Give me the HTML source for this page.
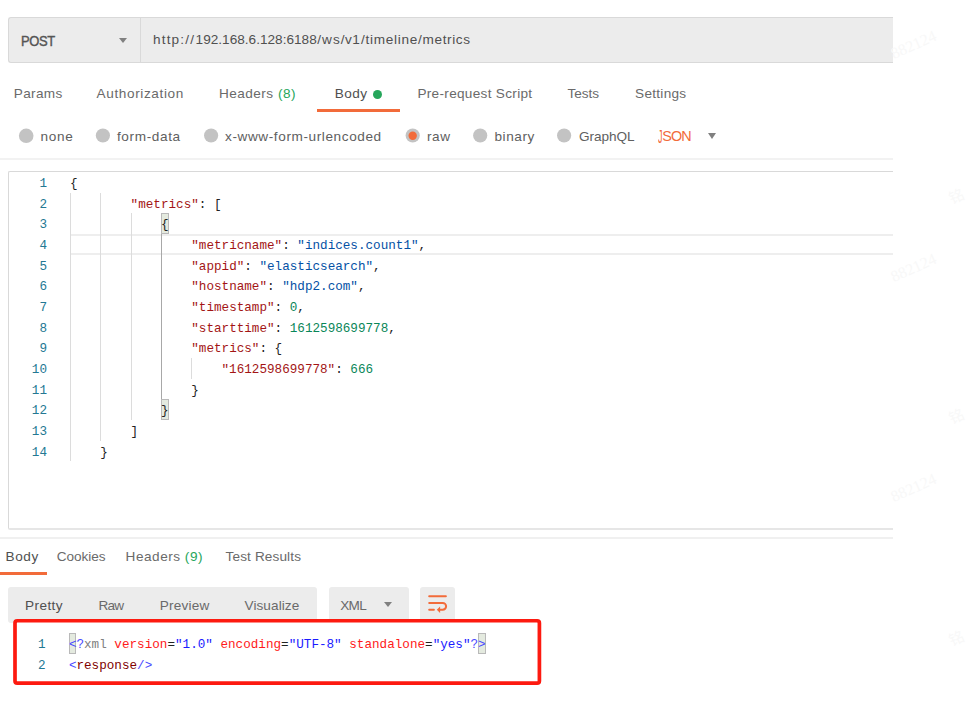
<!DOCTYPE html>
<html><head><meta charset="utf-8"><title>Postman</title>
<style>
html,body{margin:0;padding:0;background:#fff;}
body{width:977px;height:703px;position:relative;overflow:hidden;font-family:"Liberation Sans", sans-serif;font-size:13.6px;}
.t{position:absolute;white-space:nowrap;line-height:13.6px;font-size:13.6px;}
.abs{position:absolute;}
.ln{position:absolute;left:19px;width:28px;text-align:right;font-family:"Liberation Mono",monospace;font-size:12.63px;line-height:20.67px;height:20.67px;color:#237893;}
.c{position:absolute;white-space:pre;font-family:"Liberation Mono",monospace;font-size:12.63px;line-height:20.67px;height:20.67px;color:#222;}
.g{position:absolute;width:1px;}
.radio{position:absolute;width:14px;height:14px;border-radius:50%;background:#c2c2c2;}
.b{color:#4a4aff} .b2{color:#1a1aff} .r{color:#ff1a1a}
.wm{position:absolute;font-family:'Liberation Serif',serif;font-size:16px;line-height:16px;color:#f8f8f8;transform:rotate(-24deg);transform-origin:0 100%;white-space:nowrap;}
.wc{font-family:'Liberation Sans','Noto Sans CJK SC',sans-serif;font-size:15px;}
.tri{position:absolute;width:0;height:0;border-left:4.5px solid transparent;border-right:4.5px solid transparent;border-top:5px solid #808080;}
</style></head><body>
<!-- url bar -->
<div class="abs" style="left:8px;top:17px;width:885px;height:46px;background:#ececec;border:1px solid #d9d9d9;border-right:none;border-radius:3px 0 0 3px;box-sizing:border-box;"></div>
<div class="abs" style="left:140px;top:18px;width:1px;height:44px;background:#d9d9d9;"></div>
<div class="tri" style="left:118.5px;top:38px;"></div>
<!-- body underline + dot -->
<div class="abs" style="left:317px;top:109px;width:82.5px;height:3px;background:#f26b3a;"></div>
<div class="abs" style="left:373px;top:89.5px;width:9px;height:9px;border-radius:50%;background:#26a65b;"></div>
<!-- radios -->
<svg class="abs" style="left:0;top:120px" width="600" height="30" viewBox="0 120 600 30"><circle cx="26.2" cy="135.8" r="7.3" fill="#c3c3c3"/><circle cx="102.9" cy="135.5" r="7.1" fill="#c3c3c3"/><circle cx="211.1" cy="135.5" r="7.1" fill="#c3c3c3"/><circle cx="412.7" cy="135.5" r="7.1" fill="#c3c3c3"/><circle cx="480.2" cy="135.5" r="7.1" fill="#c3c3c3"/><circle cx="564.1" cy="135.5" r="7.1" fill="#c3c3c3"/><circle cx="412.7" cy="135.8" r="4.2" fill="#f26b3a"/></svg>
<div class="tri" style="left:708px;top:133.2px;border-top-width:6px;"></div>
<!-- separators -->
<div class="abs" style="left:0;top:158px;width:893px;height:2px;background:#f2f2f2;"></div>
<!-- editor -->
<div class="abs" style="left:8px;top:171px;width:885px;height:359px;border:1px solid #d9d9d9;border-bottom:2px solid #e6e6e6;border-right:none;border-radius:2px 0 0 2px;box-sizing:border-box;background:#fff;"></div>
<!-- current line highlight -->
<div class="abs" style="left:70px;top:234.01px;width:823px;height:20.67px;border-top:2px solid #eeeeee;border-bottom:2px solid #eeeeee;box-sizing:border-box;"></div>
<!-- bracket match -->
<div class="abs" style="left:160.94px;top:213.34px;width:7.6px;height:20.67px;box-sizing:border-box;border:1px solid #b9b9b9;background:#e4eadf;"></div>
<div class="abs" style="left:160.94px;top:399.37px;width:7.6px;height:20.67px;box-sizing:border-box;border:1px solid #b9b9b9;background:#e4eadf;"></div>
<span class="ln" style="top:174.00px">1</span>
<span class="c" style="left:70.00px;top:174.00px">{</span>
<span class="ln" style="top:194.67px">2</span>
<span class="c" style="left:130.62px;top:194.67px"><span style="color:#a31515">"metrics"</span>: [</span>
<span class="ln" style="top:215.34px">3</span>
<span class="c" style="left:160.94px;top:215.34px">{</span>
<span class="ln" style="top:236.01px">4</span>
<span class="c" style="left:191.25px;top:236.01px"><span style="color:#a31515">"metricname"</span>: <span style="color:#0451a5">"indices.count1"</span>,</span>
<span class="ln" style="top:256.68px">5</span>
<span class="c" style="left:191.25px;top:256.68px"><span style="color:#a31515">"appid"</span>: <span style="color:#0451a5">"elasticsearch"</span>,</span>
<span class="ln" style="top:277.35px">6</span>
<span class="c" style="left:191.25px;top:277.35px"><span style="color:#a31515">"hostname"</span>: <span style="color:#0451a5">"hdp2.com"</span>,</span>
<span class="ln" style="top:298.02px">7</span>
<span class="c" style="left:191.25px;top:298.02px"><span style="color:#a31515">"timestamp"</span>: <span style="color:#098658">0</span>,</span>
<span class="ln" style="top:318.69px">8</span>
<span class="c" style="left:191.25px;top:318.69px"><span style="color:#a31515">"starttime"</span>: <span style="color:#098658">1612598699778</span>,</span>
<span class="ln" style="top:339.36px">9</span>
<span class="c" style="left:191.25px;top:339.36px"><span style="color:#a31515">"metrics"</span>: {</span>
<span class="ln" style="top:360.03px">10</span>
<span class="c" style="left:221.56px;top:360.03px"><span style="color:#a31515">"1612598699778"</span>: <span style="color:#098658">666</span></span>
<span class="ln" style="top:380.70px">11</span>
<span class="c" style="left:191.25px;top:380.70px">}</span>
<span class="ln" style="top:401.37px">12</span>
<span class="c" style="left:160.94px;top:401.37px">}</span>
<span class="ln" style="top:422.04px">13</span>
<span class="c" style="left:130.62px;top:422.04px">]</span>
<span class="ln" style="top:442.71px">14</span>
<span class="c" style="left:100.31px;top:442.71px">}</span>
<div class="g" style="left:70.00px;top:192.67px;height:268.71px;background:#dcdcdc"></div>
<div class="g" style="left:100.31px;top:192.67px;height:248.04px;background:#dcdcdc"></div>
<div class="g" style="left:130.62px;top:213.34px;height:206.70px;background:#dcdcdc"></div>
<div class="g" style="left:160.94px;top:234.01px;height:165.36px;background:#a8a8a8"></div>
<div class="g" style="left:191.25px;top:358.03px;height:20.67px;background:#dcdcdc"></div>
<!-- response -->
<div class="abs" style="left:0;top:537px;width:893px;height:2px;background:#f0f0f0;"></div>
<div class="abs" style="left:0;top:572px;width:46.6px;height:3px;background:#f26b3a;"></div>
<div class="abs" style="left:8px;top:587px;width:309px;height:36px;background:#ececec;border-radius:3px;"></div>
<div class="abs" style="left:328.7px;top:587px;width:80px;height:36px;background:#ececec;border-radius:3px;"></div>
<div class="abs" style="left:420.4px;top:587px;width:34.5px;height:36px;background:#ececec;border-radius:3px;"></div>
<div class="tri" style="left:383.5px;top:602.4px;"></div>
<svg class="abs" style="left:420.4px;top:587px;" width="35" height="36" viewBox="0 0 35 36">
<g fill="none" stroke="#f26b3a" stroke-width="2" stroke-linecap="round" transform="translate(0.4,0)">
<path d="M8.8 9.2H25.5"/>
<path d="M8.8 15.9H22.3a3.4 3.4 0 0 1 0 6.8H19.4"/>
<path d="M8.8 22.7H13.5"/>
</g>
<path d="M16.8 22.7L20.1 19.4V26Z" fill="#f26b3a"/>
</svg>
<!-- response editor -->
<svg class="abs" style="left:0;top:600px;" width="560" height="103" viewBox="0 600 560 103"><rect x="15.00" y="620.75" width="524.40" height="62.35" rx="2.2" ry="2.2" fill="#fff" stroke="#fd1a10" stroke-width="3.7"/></svg>
<div class="abs" style="left:68.9px;top:633.0px;width:7.6px;height:20.67px;box-sizing:border-box;border:1px solid #b9b9b9;background:#e4eadf;"></div>
<div class="abs" style="left:478.11px;top:633.0px;width:7.6px;height:20.67px;box-sizing:border-box;border:1px solid #b9b9b9;background:#e4eadf;"></div>
<span class="ln" style="top:635.00px;left:20.5px;width:25px">1</span>
<span class="c" style="left:68.9px;top:635.00px"><span class="b">&lt;?</span><span style="color:#808080">xml</span> <span class="r">version</span>=<span class="b2">"1.0"</span> <span class="r">encoding</span>=<span class="b2">"UTF-8"</span> <span class="r">standalone</span>=<span class="b2">"yes"</span><span class="b">?&gt;</span></span>
<span class="ln" style="top:655.67px;left:20.5px;width:25px">2</span>
<span class="c" style="left:68.9px;top:655.67px"><span class="b">&lt;</span><span style="color:#800000">response</span><span class="b">/&gt;</span></span>
<span class="t" id="post" style="left:20.50px;top:34.50px;letter-spacing:-0.433px;color:#555;-webkit-text-stroke:0.4px #555;font-size:14.2px;display:inline-block;transform:scaleX(.915);transform-origin:0 0;">POST</span>
<span class="t" id="url1" style="left:153.00px;top:33.10px;letter-spacing:1.150px;color:#505050;">http://</span>
<span class="t" id="url2" style="left:195.60px;top:33.10px;letter-spacing:0.012px;color:#505050;">192.168.6.128:6188</span>
<span class="t" id="url3" style="left:317.20px;top:33.10px;letter-spacing:1.050px;color:#505050;">/ws</span>
<span class="t" id="url4" style="left:340.70px;top:33.10px;letter-spacing:0.450px;color:#505050;">/v1</span>
<span class="t" id="url5" style="left:361.00px;top:33.10px;letter-spacing:0.712px;color:#505050;">/timeline</span>
<span class="t" id="url6" style="left:418.10px;top:33.10px;letter-spacing:0.629px;color:#505050;">/metrics</span>
<span class="t" id="params" style="left:13.80px;top:87.30px;letter-spacing:0.340px;color:#6a6a6a;">Params</span>
<span class="t" id="auth" style="left:96.50px;top:87.30px;letter-spacing:0.625px;color:#6a6a6a;">Authorization</span>
<span class="t" id="headers" style="left:218.90px;top:87.30px;letter-spacing:0.480px;color:#6a6a6a;">Headers <span style="color:#26a65b">(8)</span></span>
<span class="t" id="body" style="left:334.80px;top:87.30px;letter-spacing:0.433px;color:#505050;">Body</span>
<span class="t" id="prereq" style="left:417.40px;top:87.30px;letter-spacing:0.306px;color:#6a6a6a;">Pre-request Script</span>
<span class="t" id="tests" style="left:567.60px;top:87.30px;letter-spacing:-0.050px;color:#6a6a6a;">Tests</span>
<span class="t" id="settings" style="left:635.10px;top:87.30px;letter-spacing:0.271px;color:#6a6a6a;">Settings</span>
<span class="t" id="none" style="left:40.40px;top:129.50px;letter-spacing:0.767px;color:#606060;">none</span>
<span class="t" id="formdata" style="left:116.90px;top:129.50px;letter-spacing:0.637px;color:#606060;">form-data</span>
<span class="t" id="xwww" style="left:225.00px;top:129.50px;letter-spacing:0.595px;color:#606060;">x-www-form-urlencoded</span>
<span class="t" id="raw" style="left:426.90px;top:129.50px;letter-spacing:0.650px;color:#606060;">raw</span>
<span class="t" id="binary" style="left:494.40px;top:129.50px;letter-spacing:0.600px;color:#606060;">binary</span>
<span class="t" id="graphql" style="left:578.90px;top:129.50px;letter-spacing:-0.033px;color:#606060;">GraphQL</span>
<span class="t" id="json" style="left:658.20px;top:130.00px;letter-spacing:-0.933px;color:#f26b3a;font-size:14.4px;"><span style="display:inline-block;transform:scale(.62,1.24);transform-origin:0 1.5px;width:4.1px">J</span>SON</span>
<span class="t" id="rbody" style="left:5.60px;top:550.00px;letter-spacing:0.533px;color:#505050;">Body</span>
<span class="t" id="cookies" style="left:56.80px;top:550.00px;letter-spacing:-0.050px;color:#6a6a6a;">Cookies</span>
<span class="t" id="rheaders" style="left:125.60px;top:550.00px;letter-spacing:0.510px;color:#6a6a6a;">Headers <span style="color:#26a65b">(9)</span></span>
<span class="t" id="testres" style="left:225.60px;top:550.00px;letter-spacing:0.118px;color:#6a6a6a;">Test Results</span>
<span class="t" id="pretty" style="left:25.10px;top:598.50px;letter-spacing:0.380px;color:#505050;">Pretty</span>
<span class="t" id="rawb" style="left:98.50px;top:598.50px;letter-spacing:-0.800px;color:#6a6a6a;">Raw</span>
<span class="t" id="preview" style="left:159.70px;top:598.50px;letter-spacing:0.233px;color:#6a6a6a;">Preview</span>
<span class="t" id="visualize" style="left:244.50px;top:598.50px;letter-spacing:0.075px;color:#6a6a6a;">Visualize</span>
<span class="t" id="xml" style="left:340.20px;top:598.50px;letter-spacing:-0.650px;color:#6a6a6a;">XML</span>
<!-- watermarks -->
<div class="wm" style="left:895px;top:46px;">882124</div>
<div class="wm" style="left:895px;top:269px;">882124</div>
<div class="wm" style="left:895px;top:489px;">882124</div>
<div class="wm wc" style="left:953px;top:191px;">铭</div>
<div class="wm wc" style="left:953px;top:411px;">铭</div>
<div class="wm wc" style="left:953px;top:633px;">铭</div>
</body></html>
